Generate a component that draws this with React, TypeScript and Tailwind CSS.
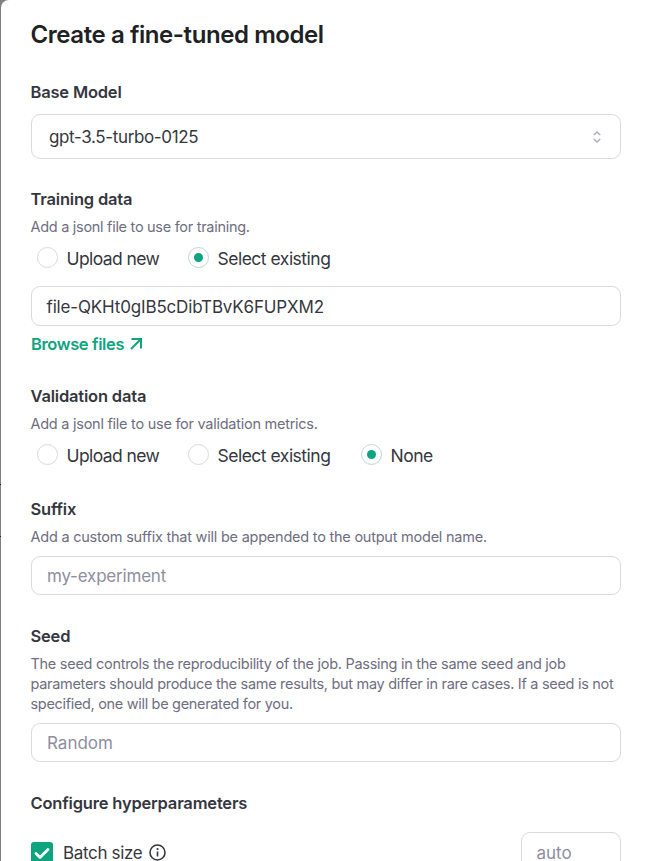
import type { ReactNode } from "react";

function Label({ children, className = "" }: { children: ReactNode; className?: string }) {
  return (
    <div className={`-ml-[0.5px] flex h-6 items-center whitespace-nowrap text-[16.5px] font-semibold leading-6 tracking-[-0.19px] text-[#353740] ${className}`}>
      <span>{children}</span>
    </div>
  );
}

function Help({ children, className = "tracking-[-0.3px]" }: { children: ReactNode; className?: string }) {
  return <p className={`-ml-[0.5px] whitespace-nowrap text-[14.5px] leading-5 text-[#6e6e80] ${className}`}>{children}</p>;
}

function Radio({
  label,
  checked = false,
  className = "",
  tracking = "tracking-[-0.5px]",
}: {
  label: string;
  checked?: boolean;
  className?: string;
  tracking?: string;
}) {
  return (
    <label className={`flex h-[21px] items-center ${className}`}>
      <span
        className={`flex size-[21px] shrink-0 items-center justify-center rounded-full border ${
          checked ? "border-[#bfd6d6]" : "border-[#d9d9e3]"
        }`}
      >
        {checked && <span className="size-[9px] rounded-full bg-[#10a37f]" />}
      </span>
      <span className={`ml-[8.5px] whitespace-nowrap pt-[2px] text-[17.5px] leading-[21px] text-[#353740] ${tracking}`}>{label}</span>
    </label>
  );
}

function Field({ children, className = "" }: { children: ReactNode; className?: string }) {
  return (
    <div className={`flex items-center whitespace-nowrap rounded-[9px] border border-[#d9d9e3] ${className}`}>{children}</div>
  );
}

export default function App() {
  return (
    <div className="relative h-[861px] w-[647px] overflow-hidden bg-[#808080] pl-px font-['Inter','Liberation_Sans',sans-serif]">
      <span className="absolute left-0 top-[484px] h-px w-px bg-[#202020]" />
      <span className="absolute left-0 top-[536px] h-px w-px bg-[#202020]" />
      <main className="flex h-[900px] flex-col rounded-tl-[8px] bg-white pl-[30px] pr-[26px]">
        <h1 className="-ml-[0.5px] mt-[19px] h-8 whitespace-nowrap text-[24px] font-semibold leading-8 tracking-[-0.42px] text-[#202123]">
          Create a fine-tuned model
        </h1>

        <Label className="mt-[29px]">Base Model</Label>
        <Field className="mt-[10px] h-[45px] justify-between pl-[17px] pr-[19px] text-[17px] text-[#353740]">
          <span className="pt-[2px] tracking-[-0.36px]">gpt-3.5-turbo-0125</span>
          <svg className="h-3 w-2" viewBox="0 0 8 12" fill="none" stroke="#acacbe" strokeWidth="1.5">
            <path d="M.8 4 4 1l3.200 3M.8 8 4 11l3.200-3" />
          </svg>
        </Field>

        <Label className="mt-7">Training data</Label>
        <Help className="mt-[6px] tracking-[-0.29px]">Add a jsonl file to use for training.</Help>
        <div className="mt-[10px] flex pl-[6px]">
          <Radio label="Upload new" className="w-[151px]" tracking="tracking-[-0.6px]" />
          <Radio label="Select existing" checked />
        </div>
        <Field className="mt-[18px] h-10 pl-[14.500px] text-[17px] text-[#353740]">
          <span className="pt-[3px] tracking-[-0.16px]">file-QKHt0gIB5cDibTBvK6FUPXM2</span>
        </Field>
        <div className="mt-[6px] flex h-6 items-center text-[16.5px] font-semibold tracking-[-0.38px] text-[#10a37f]">
          <span>Browse files</span>
          <svg className="ml-[6px] size-3" viewBox="0 0 12 12" fill="none" stroke="currentColor" strokeWidth="2">
            <path d="M1.500 1H11v9.500M11 1 1 11" />
          </svg>
        </div>

        <Label className="mt-7">Validation data</Label>
        <Help className="mt-[6px] tracking-[-0.26px]">Add a jsonl file to use for validation metrics.</Help>
        <div className="mt-[10px] flex pl-[6px]">
          <Radio label="Upload new" className="w-[151px]" tracking="tracking-[-0.6px]" />
          <Radio label="Select existing" className="w-[173px]" />
          <Radio label="None" checked />
        </div>

        <Label className="mt-8">Suffix</Label>
        <Help className="mt-[6px] tracking-[-0.23px]">Add a custom suffix that will be appended to the output model name.</Help>
        <Field className="mt-[9px] h-[39px] pl-[15px] text-[17px] text-[#8e8ea0]">
          <span className="pt-[2px] tracking-[-0.2px]">my-experiment</span>
        </Field>

        <Label className="mt-[29px]">Seed</Label>
        <div className="mt-[6px]">
          <Help className="tracking-[-0.28px]">The seed controls the reproducibility of the job. Passing in the same seed and job</Help>
          <Help>parameters should produce the same results, but may differ in rare cases. If a seed is not</Help>
          <Help className="tracking-[-0.32px]">specified, one will be generated for you.</Help>
        </div>
        <Field className="mt-[9px] h-[39px] pl-[15px] text-[17px] text-[#8e8ea0]">
          <span className="pt-[2px]">Random</span>
        </Field>

        <Label className="mt-[29px]">Configure hyperparameters</Label>
        <div className="mt-[17px] flex items-start">
          <span className="mt-[10px] flex size-[22px] items-center justify-center rounded-[3px] bg-[#10a37f]">
            <svg className="size-4" viewBox="0 0 16 16" fill="none" stroke="white" strokeWidth="2.800" strokeLinecap="round" strokeLinejoin="round">
              <path d="m2 8.500 4 4 8-8" />
            </svg>
          </span>
          <span className="ml-[10px] mt-[9px] whitespace-nowrap text-[17px] leading-6 tracking-[-0.34px] text-[#353740]">Batch size</span>
          <svg className="ml-[7px] mt-[12px] size-[17px]" viewBox="0 0 17 17" fill="none" stroke="#353740" strokeWidth="1.600">
            <circle cx="8.500" cy="8.500" r="7.500" />
            <path d="M8.500 7.500v5" />
            <circle cx="8.500" cy="5" r="1.050" fill="#353740" stroke="none" />
          </svg>
          <Field className="ml-auto h-10 w-[100px] pl-[14.500px] text-[17px] text-[#8e8ea0]">
            <span className="pt-[3px]">auto</span>
          </Field>
        </div>
      </main>
    </div>
  );
}
